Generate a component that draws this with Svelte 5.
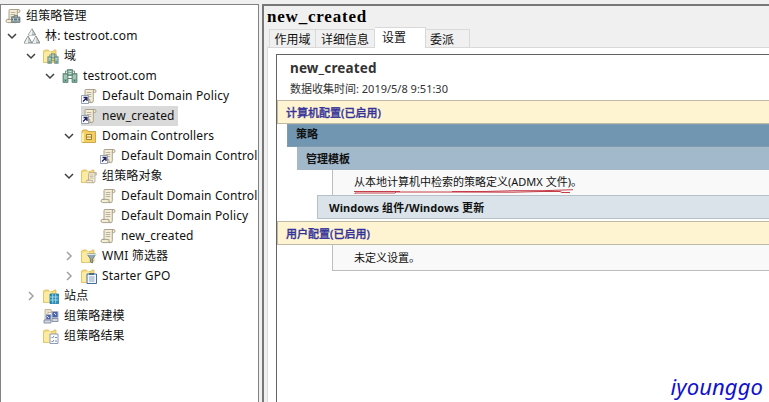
<script>
  const tree = [
    { level: 0, icon: 'root', text: '组策略管理' },
    { level: 1, icon: 'forest', text: '林: testroot.com', arrow: 'open' },
    { level: 2, icon: 'domains', text: '域', arrow: 'open' },
    { level: 3, icon: 'domain', text: 'testroot.com', arrow: 'open' },
    { level: 4, icon: 'link', text: 'Default Domain Policy' },
    { level: 4, icon: 'link', text: 'new_created', selected: true },
    { level: 4, icon: 'ou', text: 'Domain Controllers', arrow: 'open' },
    { level: 5, icon: 'link', text: 'Default Domain Control' },
    { level: 4, icon: 'gpos', text: '组策略对象', arrow: 'open' },
    { level: 5, icon: 'scroll', text: 'Default Domain Control' },
    { level: 5, icon: 'scroll', text: 'Default Domain Policy' },
    { level: 5, icon: 'scroll', text: 'new_created' },
    { level: 4, icon: 'wmi', text: 'WMI 筛选器', arrow: 'closed' },
    { level: 4, icon: 'starter', text: 'Starter GPO', arrow: 'closed' },
    { level: 2, icon: 'sites', text: '站点', arrow: 'closed' },
    { level: 2, icon: 'modeling', text: '组策略建模' },
    { level: 2, icon: 'results', text: '组策略结果' }
  ];
  const tabs = [
    { text: '作用域', width: 47 },
    { text: '详细信息', width: 59 },
    { text: '设置', width: 51, active: true },
    { text: '委派', width: 44 }
  ];
  const folderIcons = ['domains', 'gpos', 'wmi', 'starter', 'sites', 'results'];
</script>

{#snippet scroll()}
  <path d="M4.5 1.5h9.2q1.3.1 1.3 1.6t-1.4 1.5h-1.3v8.2q0 1.8-1.6 1.8H2.6Q1 14.500 1 12.900t1.500-1.500H4V3q0-1.400.5-1.500z" fill="#f4ecd5" stroke="#a29a83" stroke-width=".9" />
  <path d="M12.300 4.600V3q0-1.500 1.400-1.500M2.500 11.400h6.300q-.8 2.700 1.800 3.100" fill="none" stroke="#a29a83" stroke-width=".9" />
  <path d="M5.700 4.500h4.600M5.700 6.500h4.600M5.700 8.500h4.600" stroke="#aaa594" stroke-width=".8" />
{/snippet}

{#snippet servers(tone)}
  <path d="M3.500 5V3h9v3M8 3v4" fill="none" stroke="#78948c" />
  <path d="M5.500 1.500h5v6h-5zM1 5.500h5v9H1zM10 5.500h5v9h-5z" fill={tone} stroke="#61877a" stroke-width=".8" />
  <path d="M2 8h3M2 10h3M11 8h3M11 10h3M6.500 3.500h3M6.500 5.500h3" stroke="#d8ebdf" stroke-width=".9" />
  <path d="M3 12.500h1M12 12.500h1" stroke="#35715c" />
  <path d="M6 10.500h4" stroke="#5d8277" />
{/snippet}

{#snippet icon(name)}
  <svg class="icon" viewBox="0 0 16 16">
    {#if folderIcons.includes(name)}
      <path d="M.5 3 2 2h3.500l1 1.500H10L11 2h2v11.500l-3 1H.5z" fill="#f6db7e" stroke="#d6b34e" stroke-width=".7" />
      <path d="M1 4.500 8 3v10l-2 1.500-5-1z" fill="#ffefaa" opacity=".8" />
    {/if}
    {#if name === 'root'}
      {@render scroll()}
      <path d="M6.500 9h8.500v5.500H6.500z" fill="#8ea0a6" stroke="#66777d" stroke-width=".7" />
      <path d="M9 9V7.700h3.500V9M7 11.500h8" fill="none" stroke="#586b71" stroke-width=".9" />
      <path d="M8.500 10.500v2M12.700 10.500v2" stroke="#d0dde0" />
    {:else if name === 'forest'}
      <path d="M8 .8 11.700 7H4.300zM4 8l4 7H0zM12 8l4 7H8z" fill="#c5cccd" stroke="#7e8586" stroke-width=".9" />
      <path d="M8 1v6H4.500zM4 8.500V15H.8zM12 8.500V15H8.500z" fill="#eef1f1" />
    {:else if name === 'domains'}
      <g transform="translate(4 4.500) scale(.75)">{@render servers('#83aaa0')}</g>
    {:else if name === 'domain'}
      {@render servers('#79a893')}
    {:else if name === 'scroll'}
      {@render scroll()}
    {:else if name === 'link'}
      {@render scroll()}
      <path d="M.5 7.500h7v8h-7z" fill="#fafbff" stroke="#7e8ca1" stroke-width=".8" />
      <path d="m2 13.500 3.500-3.500M2.500 9.500H6V13" fill="none" stroke="#24255f" stroke-width="1.300" />
    {:else if name === 'ou'}
      <path d="M1 3.500 2 2h4l1 1.500h7.500v11H1z" fill="#f4ce61" stroke="#c39b35" stroke-width=".8" />
      <path d="M1 5.500 3 4v9.500l-2 1z" fill="#fff0a5" />
      <path d="M5.500 6.500h5v5h-5zM6 9h4" fill="#fff1aa" stroke="#96762d" stroke-width=".9" />
    {:else if name === 'gpos'}
      <g transform="translate(4.500 3.500) scale(.77)">{@render scroll()}</g>
    {:else if name === 'wmi'}
      <path d="M6 6h9l-3.500 5v4l-2-1v-3z" fill="#92a8b2" stroke="#5e7987" stroke-width=".8" />
      <path d="M6 6.500h9" stroke="#d9e7eb" />
    {:else if name === 'starter'}
      <path d="M6 6h9.500v9.500H6z" fill="#f1f8ff" stroke="#426c9c" />
      <path d="M8 5h5v2H8z" fill="#516b87" />
      <path d="M8 9h5.500M8 11h5.500M8 13h5.500" stroke="#718dae" stroke-width=".8" />
    {:else if name === 'sites'}
      <path d="M7 6h8.500v9.500H7z" fill="#258fbd" stroke="#17739d" stroke-width=".8" />
      <path d="M9.700 6v9.500M12.700 6v9.500M7 9h8.500M7 12h8.500" stroke="#b4e0ee" stroke-width=".8" />
    {:else if name === 'modeling'}
      <path d="M2 1.500h6l1 3H5v8H2z" fill="#e6dfd0" stroke="#bdaa85" stroke-width=".8" />
      <path d="M3 6.500h5v5H3zM9 3.500h6v6H9z" fill="#4865ae" stroke="#adb4c6" />
      <path d="M1 12h7v3H1zM9 10.500h6v3H9z" fill="#d5d7df" stroke="#747f9c" stroke-width=".8" />
      <path d="m11 5 2 2M4 8l2 2" stroke="#dce5ff" />
    {:else if name === 'results'}
      <path d="M7 6h8v9.500H7z" fill="#fbfcff" stroke="#8593aa" stroke-width=".9" />
      <path d="m8.500 9 1 1 1.500-2m-2.500 5 1 1 1.500-2M12 9.500h2M12 13h2" fill="none" stroke="#55709b" stroke-width=".8" />
    {/if}
  </svg>
{/snippet}

<div class="window">
  <nav class="tree">
    {#each tree as node}
      <div class="node level{node.level}">
        <span class="twist">
          {#if node.arrow}
            <svg class:closed={node.arrow === 'closed'} viewBox="0 0 10 10">
              <path d={node.arrow === 'open' ? 'm1 3 4 4 4-4' : 'm3 1 4 4-4 4'} />
            </svg>
          {/if}
        </span>
        <div class="item" class:selected={node.selected}>
          {@render icon(node.icon)}
          <span class="label">{node.text}</span>
        </div>
      </div>
    {/each}
  </nav>

  <main>
    <h1>new_created</h1>
    <div class="tabs">
      {#each tabs as tab}
        <div class="tab" class:active={tab.active} style:width="{tab.width}px">{tab.text}</div>
      {/each}
    </div>
    <div class="page">
      <section class="report">
        <header>
          <h2>new_created</h2>
          <p>数据收集时间: 2019/5/8 9:51:30</p>
        </header>
        <div class="bar config">计算机配置(已启用)</div>
        <div class="bar policy">策略</div>
        <div class="bar templates">管理模板</div>
        <div class="detail definition">
          <span>从本地计算机中检索的策略定义(ADMX 文件)。</span>
          <svg class="marks" viewBox="0 0 220 6">
            <path d="M0 1.500h46M98 1.500h33l30-.8h28l30-1M1 4V3h40l1-1h47l70 .2 28-.7h19l2 1h8" />
          </svg>
        </div>
        <div class="bar component">Windows 组件/Windows 更新</div>
        <div class="bar config user">用户配置(已启用)</div>
        <div class="detail empty">未定义设置。</div>
        <div class="signature">iyounggo</div>
      </section>
    </div>
  </main>
</div>

<style>
  .window {
    display: flex;
    width: 769px;
    height: 402px;
    box-sizing: border-box;
    padding-top: 4px;
    gap: 3px;
    overflow: hidden;
    background: #f0f0f0;
    color: #111;
    font-family: "Noto Sans", "Noto Sans CJK SC", sans-serif;
    font-size: 12px;
  }
  .tree {
    flex: none;
    width: 259px;
    box-sizing: border-box;
    border: 1px solid #828282;
    border-bottom: 0;
    padding-top: 1px;
    overflow: hidden;
    background: #fff;
  }
  .node { display: flex; align-items: center; height: 20px; white-space: nowrap; }
  .level0 { margin-left: -13px; }
  .level1 { margin-left: 6px; }
  .level2 { margin-left: 25px; }
  .level3 { margin-left: 44px; }
  .level4 { margin-left: 63px; }
  .level5 { margin-left: 82px; }
  .twist { flex: none; width: 17px; height: 10px; }
  .twist svg { display: block; width: 10px; height: 10px; }
  .twist path { fill: none; stroke: #404040; stroke-width: 1.5; }
  .twist .closed path { stroke: #a0a0a0; }
  .item { display: flex; align-items: center; height: 20px; }
  .icon { flex: none; width: 16px; height: 16px; }
  .label { height: 20px; padding: 0 3px 0 5px; line-height: 19px; letter-spacing: .13px; }
  .selected { background: #d9d9d9; }
  main {
    flex: 1;
    display: flex;
    flex-direction: column;
    box-sizing: border-box;
    min-width: 0;
    border-left: 2px solid #777;
    border-top: 2px solid #777;
    background: #f0f0f0;
  }
  h1 {
    height: 21px;
    margin: 0 0 0 3px;
    font: bold 17px/22px "Liberation Serif", serif;
    letter-spacing: .8px;
    color: #000;
  }
  .tabs { display: flex; align-items: flex-end; height: 20px; padding-left: 5px; }
  .tab {
    height: 18px;
    box-sizing: border-box;
    border: 1px solid #d9d9d9;
    border-left: 0;
    border-bottom: 0;
    text-align: center;
    line-height: 19px;
    white-space: nowrap;
  }
  .tab:first-child { border-left: 1px solid #d9d9d9; }
  .tab.active { height: 21px; margin-bottom: -1px; padding-right: 12px; background: #fff; }
  .tab:last-child { text-align: left; padding-left: 4px; }
  .page {
    flex: 1;
    display: flex;
    margin-left: 3px;
    padding: 6px 0 0 8px;
    border-left: 1px solid #dcdcdc;
    border-top: 1px solid #d9d9d9;
    background: #fff;
  }
  .tab.active { position: relative; }
  .report {
    flex: 1;
    display: flex;
    flex-direction: column;
    box-sizing: border-box;
    border-left: 1px solid #646464;
    border-top: 1px solid #646464;
  }
  header { height: 45px; padding-left: 13px; color: #333; }
  h2 { margin: 0; padding-top: 4px; font-size: 13.5px; line-height: 19px; letter-spacing: .15px; }
  p { margin: 0; padding-top: 2px; font-size: 11px; line-height: 18px; }
  .bar {
    flex: none;
    height: 23px;
    box-sizing: border-box;
    border: 1px solid #b6b6ac;
    border-right: 0;
    padding-left: 8px;
    font-size: 11px;
    font-weight: bold;
    line-height: 21px;
  }
  .config {
    height: 24px;
    background: #fff4d1;
    border-color: #bfbaa5;
    color: #333399;
    line-height: 24px;
    font-weight: 500;
    -webkit-text-stroke: .3px #333399;
  }
  .policy { margin-left: 10px; background: #7096b1; border-color: #7f9cb0; line-height: 17px; }
  .templates { margin-left: 20px; background: #a2b9cc; border-color: #a6b8c6; }
  .detail {
    flex: none;
    margin-left: 55px;
    box-sizing: border-box;
    border-left: 1px solid #bdbdbd;
    padding-left: 21px;
    background: #f9f9f9;
    font-size: 11px;
    line-height: 24px;
  }
  .definition { position: relative; height: 25px; }
  .marks { position: absolute; left: 21px; top: 20px; width: 220px; height: 6px; overflow: visible; }
  .marks path { fill: none; stroke: #c43e49; stroke-width: 1; }
  .component {
    height: 24px;
    margin-left: 40px;
    padding-left: 11px;
    background: #dae3ea;
    border-color: #b7c0c6;
    line-height: 23px;
    letter-spacing: .08px;
  }
  .user { margin-top: 2px; }
  .empty { height: 26px; border-bottom: 1px solid #bdbdbd; line-height: 25px; }
  .signature {
    margin: auto 6px 1px auto;
    color: #1110ce;
    font-size: 22px;
    font-style: italic;
    line-height: 30px;
    letter-spacing: .1px;
  }
</style>
